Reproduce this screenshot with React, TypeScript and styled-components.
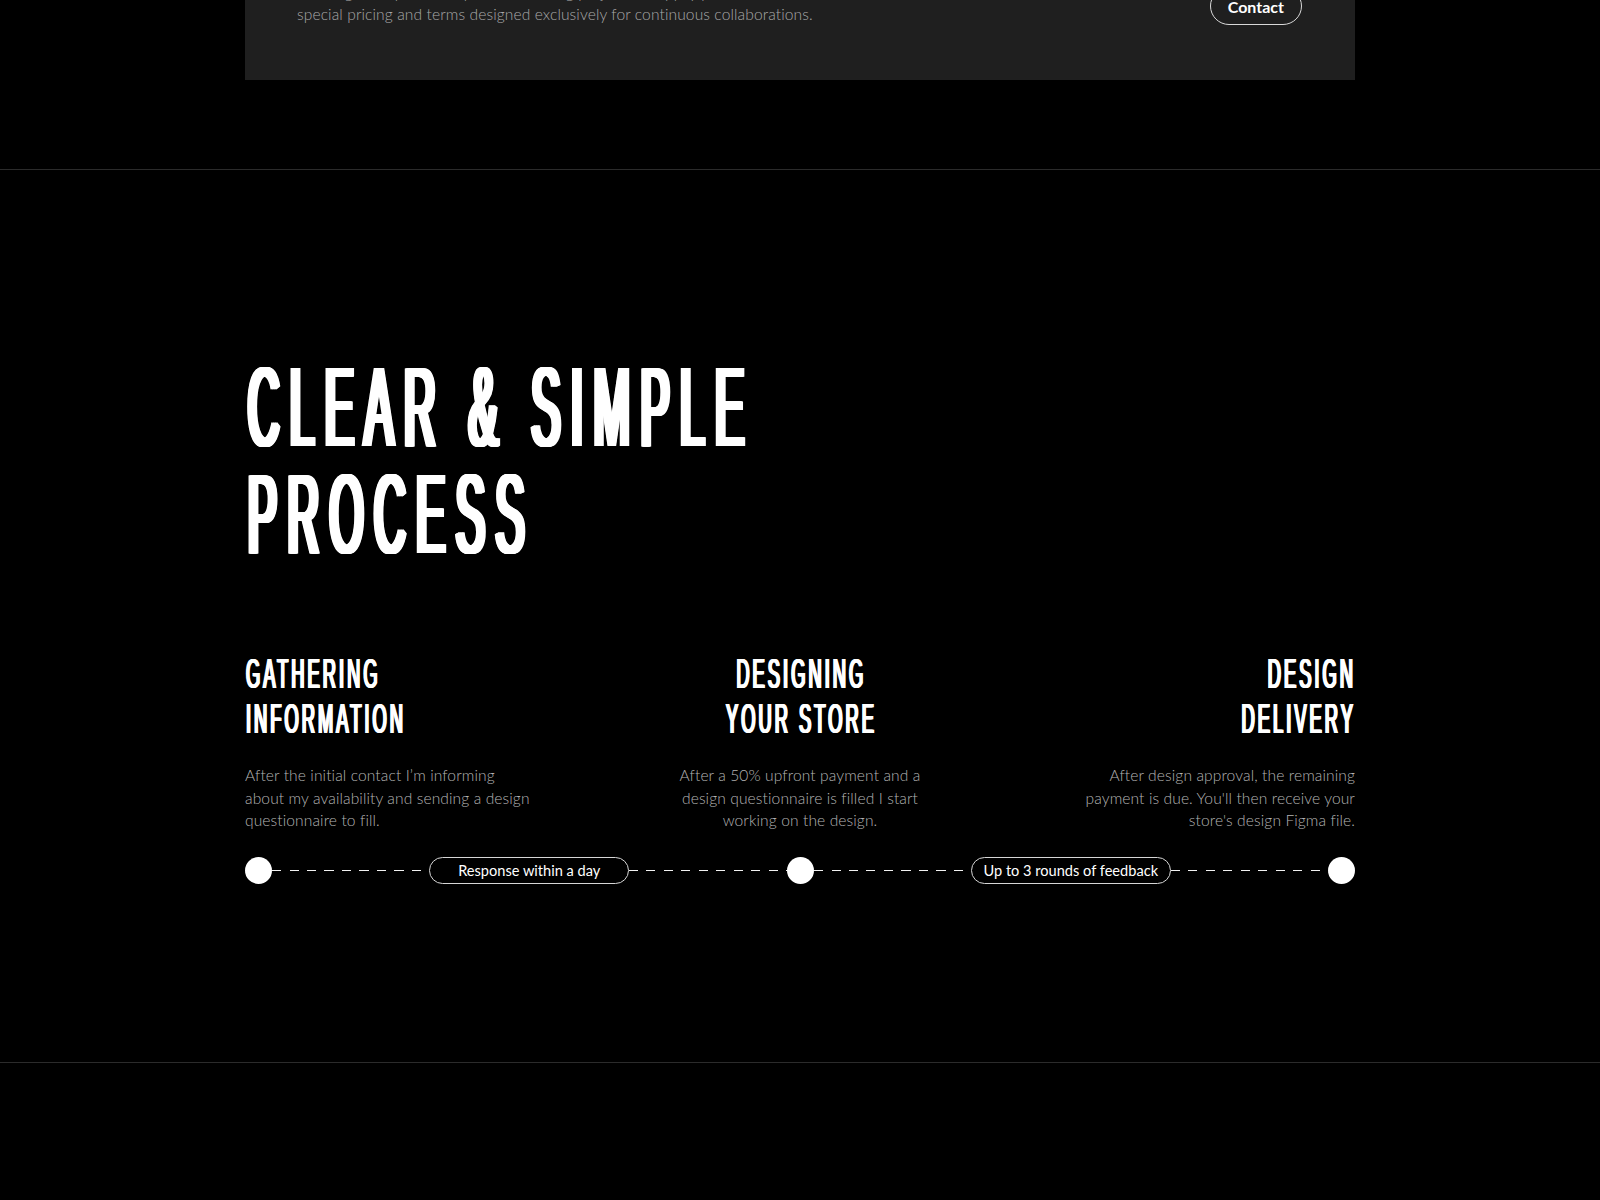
import React from "react";
import styled, { createGlobalStyle } from "styled-components";

const GlobalStyle = createGlobalStyle`
  html, body {
    margin: 0;
    padding: 0;
    background: #000;
  }
  body {
    font-family: Lato, "Open Sans", Arial, sans-serif;
    color: #fff;
    overflow: hidden;
  }
  * { box-sizing: border-box; }
`;

const Page = styled.div`
  background: #000;
  min-height: 1200px;
  margin-top: -71px;
`;

const Container = styled.div`
  width: 1110px;
  margin: 0 auto;
`;

const TopSection = styled.section`
  padding-bottom: 89px;
  border-bottom: 1px solid #2b2b2b;
`;

const Card = styled.div`
  background: #1f1f1f;
  padding: 52px 53px 54px 52px;
  display: flex;
  align-items: center;
  justify-content: space-between;
`;

const CardText = styled.p`
  margin: 0;
  font-size: 15.6px;
  font-weight: 300;
  line-height: 22.4px;
  letter-spacing: 0.1px;
  color: #a8a8a8;
`;

const ContactButton = styled.button`
  height: 38px;
  margin-top: 6px;
  padding: 0 17px;
  border: 1px solid #d9d9d9;
  border-radius: 999px;
  background: transparent;
  color: #fff;
  font-family: Lato, Arial, sans-serif;
  font-weight: 700;
  font-size: 16px;
  cursor: pointer;
`;

const ProcessSection = styled.section`
  padding: 183px 0 178px;
  border-bottom: 1px solid #2b2b2b;
`;

type Align = "left" | "center" | "right";

/* Tall condensed display type: a plain sans squeezed horizontally,
   with stems thickened by a short run of horizontal text-shadows. */
const shadowRun = (width: number) => {
  const steps: string[] = [];
  for (let x = 1.5; x <= width + 0.01; x += 1.5) steps.push(`${x.toFixed(1)}px 0 0 #fff`);
  return steps.join(", ");
};

const Condensed = styled.span<{
  $align?: Align;
  $scale: number;
  $spacing: number;
  $weight: number;
}>`
  display: inline-block;
  white-space: nowrap;
  letter-spacing: ${(p) => p.$spacing}px;
  text-shadow: ${(p) => shadowRun(p.$weight)};
  transform: scaleX(${(p) => p.$scale});
  transform-origin: ${(p) => p.$align ?? "left"} center;
`;

const Heading = styled.h2`
  margin: 0;
  font-family: "Liberation Sans", Arial, sans-serif;
  font-weight: 400;
  font-size: 114px;
  line-height: 107px;
  color: #fff;
`;

const Steps = styled.div`
  display: grid;
  grid-template-columns: 1fr 1fr 1fr;
  margin-top: 85px;
`;

const Step = styled.div<{ $align: Align }>`
  display: flex;
  flex-direction: column;
  align-items: ${(p) =>
    p.$align === "left" ? "flex-start" : p.$align === "right" ? "flex-end" : "center"};
  text-align: ${(p) => p.$align};
`;

const StepTitle = styled.h3`
  margin: 0;
  font-family: "Liberation Sans", Arial, sans-serif;
  font-weight: 400;
  font-size: 42px;
  line-height: 44.7px;
  color: #fff;
`;

const StepText = styled.p`
  margin: 23px 0 0;
  font-size: 15.6px;
  font-weight: 300;
  line-height: 22.4px;
  letter-spacing: 0.1px;
  color: #b3b3b3;
`;

const Timeline = styled.div`
  display: flex;
  align-items: center;
  margin-top: 26px;
  height: 27px;
`;

const Dot = styled.span`
  flex: none;
  width: 27px;
  height: 27px;
  border-radius: 50%;
  background: #fff;
`;

const Dashes = styled.span`
  flex: 1;
  height: 1px;
  background: repeating-linear-gradient(
    90deg,
    #f2f2f2 0 9px,
    transparent 9px 17.5px
  );
`;

const Pill = styled.span`
  flex: none;
  width: 200px;
  height: 27px;
  border: 1px solid #d6d6d6;
  border-radius: 999px;
  display: flex;
  align-items: center;
  justify-content: center;
  font-size: 14.6px;
  font-weight: 400;
  color: #fff;
`;

const steps: { align: Align; title: string[]; text: string[] }[] = [
  {
    align: "left",
    title: ["GATHERING", "INFORMATION"],
    text: [
      "After the initial contact I’m informing",
      "about my availability and sending a design",
      "questionnaire to fill.",
    ],
  },
  {
    align: "center",
    title: ["DESIGNING", "YOUR STORE"],
    text: [
      "After a 50% upfront payment and a",
      "design questionnaire is filled I start",
      "working on the design.",
    ],
  },
  {
    align: "right",
    title: ["DESIGN", "DELIVERY"],
    text: [
      "After design approval, the remaining",
      "payment is due. You'll then receive your",
      "store's design Figma file.",
    ],
  },
];

export default function App() {
  return (
    <>
      <GlobalStyle />
      <Page>
        <TopSection>
          <Container>
            <Card>
              <CardText>
                For long-term partnerships and recurring projects, I happily provide
                <br />
                special pricing and terms designed exclusively for continuous collaborations.
              </CardText>
              <ContactButton>Contact</ContactButton>
            </Card>
          </Container>
        </TopSection>

        <ProcessSection>
          <Container>
            <Heading>
              <Condensed $scale={0.382} $spacing={27.8} $weight={15.7}>
                CLEAR &amp; SIMPLE
              </Condensed>
              <br />
              <Condensed $scale={0.382} $spacing={27.8} $weight={15.7}>
                PROCESS
              </Condensed>
            </Heading>

            <Steps>
              {steps.map((s) => (
                <Step key={s.title.join(" ")} $align={s.align}>
                  <StepTitle>
                    {s.title.map((line, i) => (
                      <React.Fragment key={line}>
                        {i > 0 && <br />}
                        <Condensed $scale={0.435} $spacing={7} $weight={4.5} $align={s.align}>
                          {line}
                        </Condensed>
                      </React.Fragment>
                    ))}
                  </StepTitle>
                  <StepText>
                    {s.text.map((line, i) => (
                      <React.Fragment key={line}>
                        {i > 0 && <br />}
                        {line}
                      </React.Fragment>
                    ))}
                  </StepText>
                </Step>
              ))}
            </Steps>

            <Timeline>
              <Dot />
              <Dashes />
              <Pill>Response within a day</Pill>
              <Dashes />
              <Dot />
              <Dashes />
              <Pill>Up to 3 rounds of feedback</Pill>
              <Dashes />
              <Dot />
            </Timeline>
          </Container>
        </ProcessSection>
      </Page>
    </>
  );
}
